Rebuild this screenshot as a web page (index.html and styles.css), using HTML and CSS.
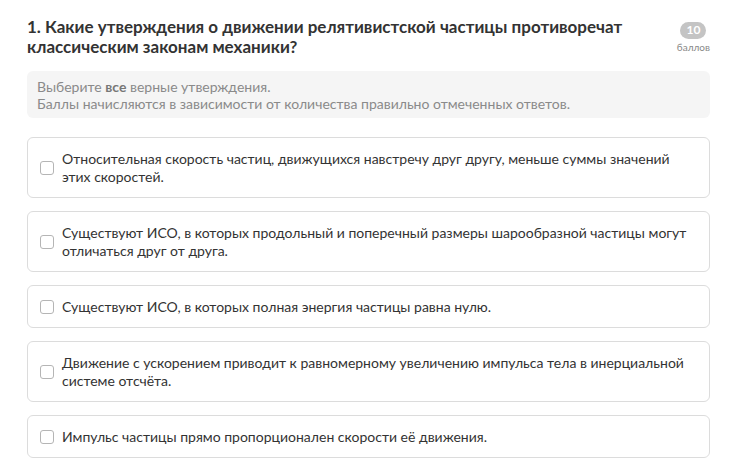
FILE: index.html
```html
<!DOCTYPE html>
<html lang="ru">
<head>
<meta charset="utf-8">
<link rel="stylesheet" href="styles.css">
</head>
<body>
<div class="question">
  <div class="head">
    <h1 class="title">1. Какие утверждения о движении релятивистской частицы противоречат классическим законам механики?</h1>
    <div class="points">
      <span class="badge">10</span>
      <span class="points-label">баллов</span>
    </div>
  </div>
  <div class="hint">
    <div>Выберите <b>все</b> верные утверждения.</div>
    <div>Баллы начисляются в зависимости от количества правильно отмеченных ответов.</div>
  </div>
  <div class="options">
    <label class="option"><span class="box"></span><span class="text">Относительная скорость частиц, движущихся навстречу друг другу, меньше суммы значений этих скоростей.</span></label>
    <label class="option"><span class="box"></span><span class="text">Существуют ИСО, в которых продольный и поперечный размеры шарообразной частицы могут отличаться друг от друга.</span></label>
    <label class="option"><span class="box"></span><span class="text">Существуют ИСО, в которых полная энергия частицы равна нулю.</span></label>
    <label class="option"><span class="box"></span><span class="text">Движение с ускорением приводит к равномерному увеличению импульса тела в инерциальной системе отсчёта.</span></label>
    <label class="option"><span class="box"></span><span class="text">Импульс частицы прямо пропорционален скорости её движения.</span></label>
  </div>
</div>
</body>
</html>
```
FILE: styles.css
```css
* { box-sizing: border-box; }
body {
  margin: 0;
  background: #fff;
  font-family: "Lato", "Open Sans", sans-serif;
  color: #333;
}
.question {
  padding: 17px 31px 0 27px;
}
.head {
  display: flex;
  justify-content: space-between;
  align-items: flex-start;
}
.title {
  margin: 0;
  font-size: 17px;
  line-height: 20px;
  font-weight: 700;
  color: #333;
  max-width: 610px;
}
.points {
  display: flex;
  flex-direction: column;
  align-items: center;
  margin-top: 5px;
}
.badge {
  background: #c4c4c4;
  color: #fff;
  font-weight: 700;
  font-size: 12px;
  line-height: 16px;
  height: 17px;
  min-width: 26px;
  border-radius: 9px;
  text-align: center;
}
.points-label {
  font-size: 10px;
  color: #888;
  line-height: 12px;
  margin-top: 2px;
}
.hint {
  margin-top: 14px;
  background: #f5f5f5;
  border-radius: 6px;
  padding: 6.5px 10px;
  font-size: 14px;
  line-height: 17px;
  color: #8a8a8a;
}
.hint b { font-weight: 700; color: #777; }
.options {
  margin-top: 19px;
  display: flex;
  flex-direction: column;
  gap: 13px;
}
.option {
  display: flex;
  align-items: center;
  gap: 8px;
  border: 1px solid #dcdcdc;
  border-radius: 6px;
  padding: 11.5px 20px 11.5px 12px;
  font-size: 14px;
  line-height: 18px;
  color: #333;
}
.box {
  flex: none;
  width: 14px;
  height: 14px;
  border: 1px solid #b5b5b5;
  border-radius: 3px;
  background: #fff;
}
```
